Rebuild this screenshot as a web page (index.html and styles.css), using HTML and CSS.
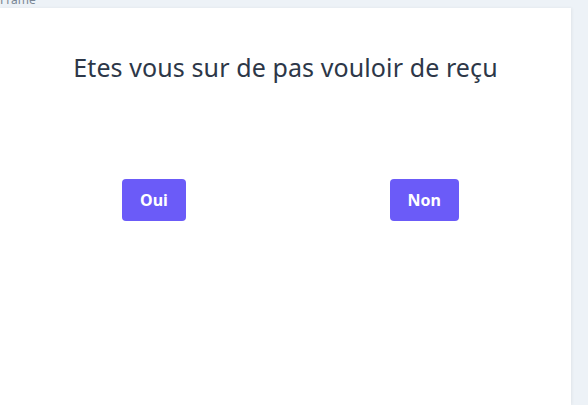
FILE: index.html
```html
<!DOCTYPE html>
<html>
<head>
<meta charset="utf-8">
<link rel="stylesheet" href="styles.css">
</head>
<body>
<div class="label">Frame</div>
<div class="frame">
  <h1 class="title">Etes vous sur de pas vouloir de reçu</h1>
  <div class="actions">
    <button class="btn">Oui</button>
    <button class="btn">Non</button>
  </div>
</div>
</body>
</html>
```
FILE: styles.css
```css
html, body {
  margin: 0;
  padding: 0;
  background: #edf2f7;
  width: 588px;
  height: 405px;
  overflow: hidden;
  font-family: "Noto Sans", sans-serif;
}
.label {
  position: absolute;
  top: -8px;
  left: 0;
  font-size: 12px;
  color: #7a8694;
  line-height: 16px;
}
.frame {
  margin-top: 8px;
  width: 571px;
  height: 397px;
  background: #ffffff;
  box-shadow: 1px 0 3px rgba(0, 0, 0, 0.06);
  box-sizing: border-box;
  padding-top: 43px;
}
.title {
  margin: 0;
  text-align: center;
  font-size: 25px;
  font-weight: 400;
  color: #2d3748;
  line-height: 32px;
  letter-spacing: 0.1px;
}
.actions {
  display: flex;
  justify-content: space-between;
  padding: 0 112px 0 122px;
  margin-top: 96px;
}
.btn {
  background: #6b5bf8;
  color: #ffffff;
  border: none;
  border-radius: 4px;
  height: 42px;
  padding: 0 18px;
  font-family: "Noto Sans", sans-serif;
  font-size: 16px;
  font-weight: 700;
}
```
